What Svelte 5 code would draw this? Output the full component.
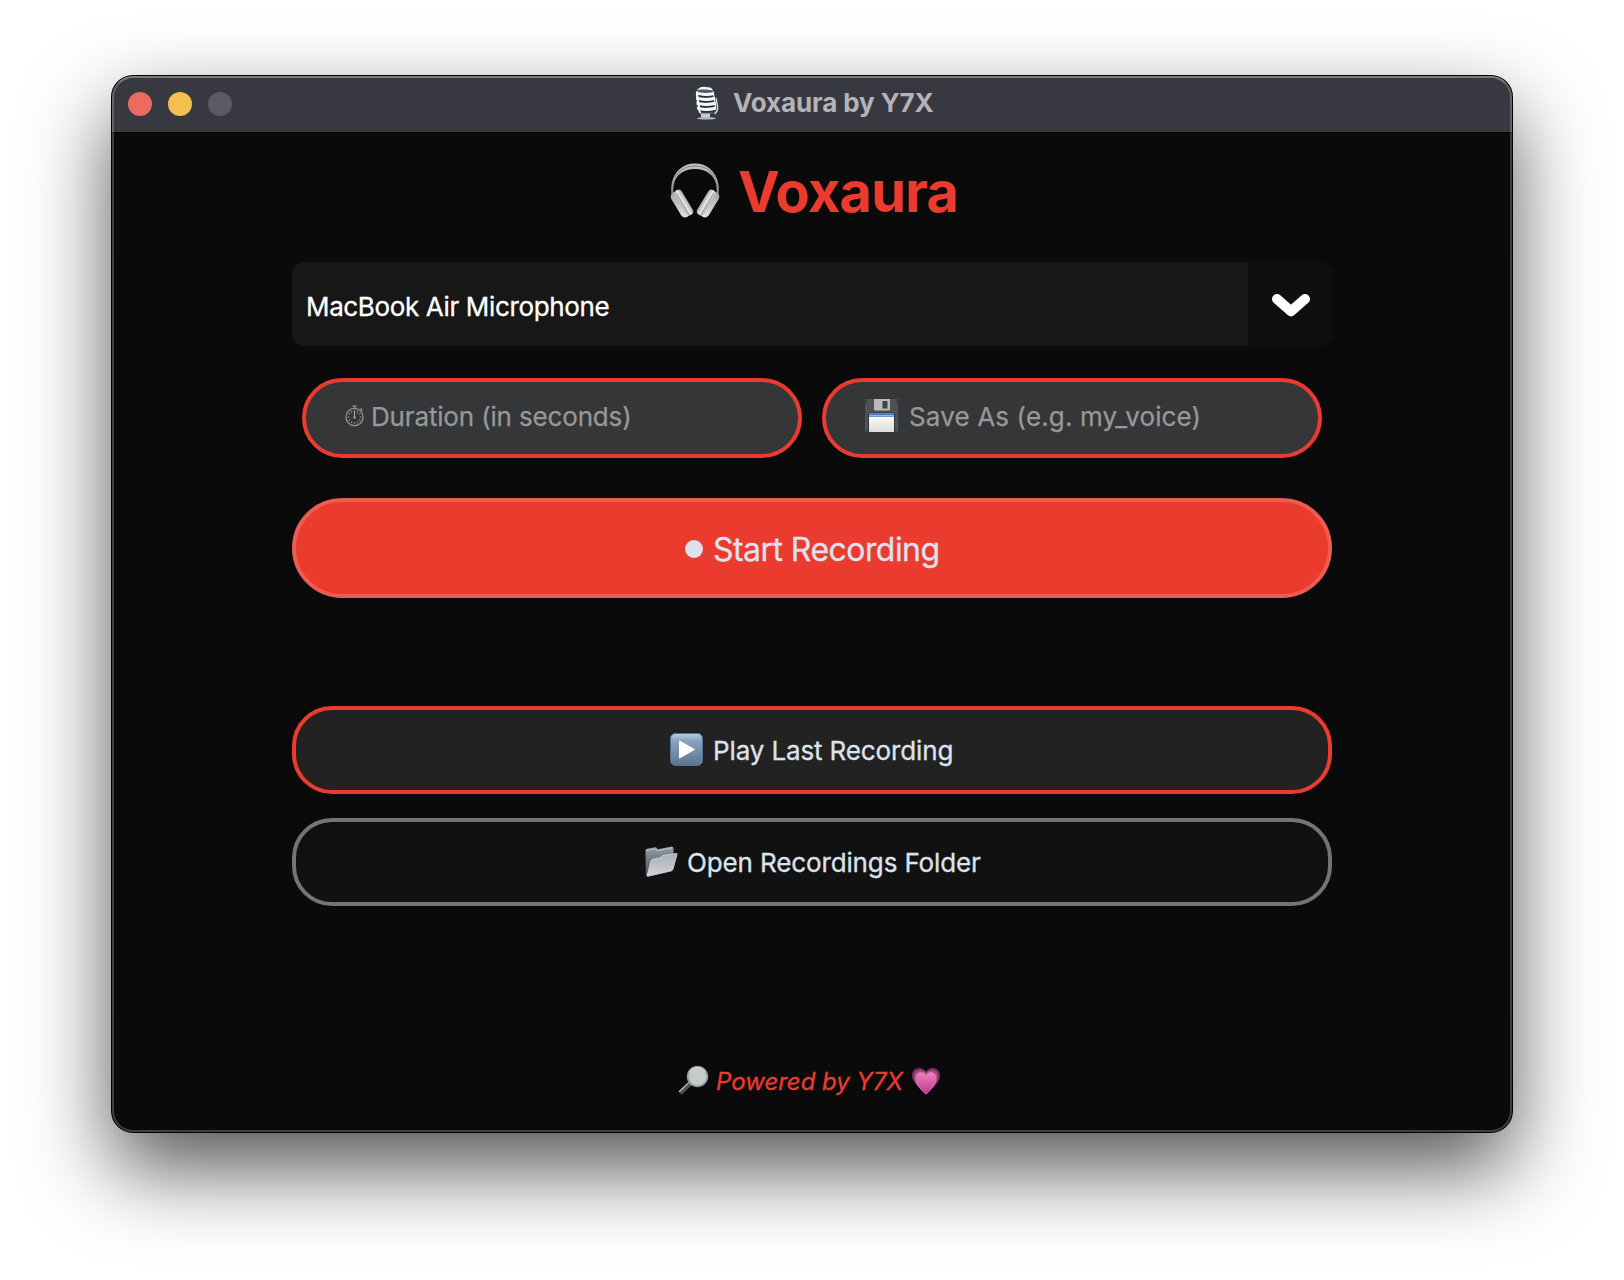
<script lang="ts">
  const ticks = Array.from({ length: 12 }, (_, i) => i * 30);
  const grille = [93, 98, 103, 108];
</script>

<main class="desktop">
  <section class="window">
    <header class="titlebar">
      <div class="lights">
        <span class="light close"></span>
        <span class="light minimize"></span>
        <span class="light zoom"></span>
      </div>
      <div class="caption">
        <svg class="mic" viewBox="694 84 26 36">
          <defs>
            <clipPath id="mic-head"><path d="M696 96c-1-7 3-10 8-10.500s9 1 10 7l2 12c1 6-3 9-8 9.500s-10-1-11-7z" /></clipPath>
          </defs>
          <g clip-path="url(#mic-head)">
            <rect x="694" y="84" width="26" height="32" fill="#4a5a68" />
            <path d="M695 88l8-1 14 1.500" stroke="#f2f5f7" stroke-width="2.600" fill="none" />
            {#each grille as y}
              <path d="M695 {y - 1}q10 3 23 0" stroke="#f4f6f7" stroke-width="3.200" fill="none" />
              <path d="M697 {y + 1.4}q10 3 20 0" stroke="#2e3038" stroke-width="1.200" fill="none" />
            {/each}
            <path d="M696.500 90l3.500 23" stroke="#fff" stroke-width="2" />
            <path d="M713.500 90l2.500 18" stroke="#fff" stroke-width="1.500" />
          </g>
          <path d="M716 97l1.500 8q.7 5-3 8" stroke="#d9dcdd" stroke-width="1.400" fill="none" />
          <path d="M701 112.500h9v4h-9z" fill="#c5cdd1" />
          <ellipse cx="706.500" cy="117.300" rx="9.500" ry="1.300" fill="#b6bcc0" />
        </svg>
        <span class="caption-text">Voxaura by Y7X</span>
      </div>
    </header>

    <div class="content">
      <h1 class="brand">
        <svg class="headphones" viewBox="670 163 50 56">
          <defs>
            <linearGradient id="band" x1="0" y1="0" x2="0" y2="1">
              <stop offset="0" stop-color="#c6c6c6" /><stop offset="1" stop-color="#858585" />
            </linearGradient>
            <linearGradient id="cup" x1="0" y1="0" x2="1" y2="0">
              <stop offset="0" stop-color="#b4b4b4" /><stop offset=".5" stop-color="#e8e8e8" /><stop offset="1" stop-color="#a4a4a4" />
            </linearGradient>
            <linearGradient id="shell" x1="0" y1="0" x2="0" y2="1">
              <stop offset="0" stop-color="#aaa" /><stop offset="1" stop-color="#e2e2e2" />
            </linearGradient>
            <g id="ear">
              <rect x="-5" y="-14" width="10" height="28" rx="4.500" transform="translate(680.500 204.500) rotate(-31)" fill="url(#shell)" />
              <rect x="-4" y="-14.500" width="8" height="28.500" rx="4" transform="translate(684 202.800) rotate(-31)" fill="url(#cup)" />
              <path d="M676.500 193.500l13 22" stroke="#8d8d8d" stroke-width=".8" />
            </g>
          </defs>
          <path d="M671.800 196c-1-4-.8-9 0-13 2.600-12 11.600-19.500 23.200-19.500s20.600 7.500 23.200 19.500c.8 4 1 9 0 13h-1.700c.4-4.500.2-9-.5-12.500-2.300-9-10-14.500-21-14.500s-18.700 5.500-21 14.500c-.7 3.500-.9 8-.5 12.500z" fill="url(#band)" />
          <path d="M675.500 177c4-7.500 11-11 19.500-11s15.500 3.500 19.500 11" fill="none" stroke="#6f6f6f" stroke-width=".8" />
          <use href="#ear" />
          <use href="#ear" transform="matrix(-1 0 0 1 1390 0)" />
        </svg>
        <span class="brand-text">Voxaura</span>
      </h1>

      <div class="select">
        <span class="device">MacBook Air Microphone</span>
        <span class="arrow">
          <svg class="chevron" viewBox="0 0 38 22"><path d="M5 5l14 12.200L33 5" /></svg>
        </span>
      </div>

      <div class="fields">
        <div class="field">
          <svg class="stopwatch" viewBox="0 0 20 22">
            <circle cx="9.500" cy="12" r="8.600" />
            <path d="M7.500 1.200h4M9.500 1v3M15.500 3.500l2 2M9.500 6v6" />
            {#each ticks as angle}
              <path d="M9.500 5.200v1.500" transform="rotate({angle} 9.500 12)" />
            {/each}
            <circle cx="9.500" cy="12.500" r=".7" />
          </svg>
          <span class="duration">Duration (in seconds)</span>
        </div>
        <div class="field">
          <svg class="floppy" viewBox="0 0 33 33">
            <defs>
              <linearGradient id="paper" x1="0" y1="0" x2="0" y2="1">
                <stop offset="0" stop-color="#fff" /><stop offset="1" stop-color="#dcdcdc" />
              </linearGradient>
            </defs>
            <path d="M0 0h32l1 1v32H0z" fill="#505152" />
            <path d="M1 1v4M32 1v4M2 31v2M31 31v2" stroke="#333" />
            <path d="M9 0h16v10.500q0 1-1 1H10q-1 0-1-1z" fill="#b9b9bb" />
            <path d="M17.500 2h5v7.500h-5z" fill="#424244" />
            <path d="M3 33V15q0-1.500 1.500-1.500h24Q30 13.500 30 15v18" fill="#303133" />
            <path d="M4 14.500h25V33H4z" fill="url(#paper)" />
            <path d="M4 14.500h25V18H4z" fill="#3f72bd" />
            <path d="M4 16.800h25" stroke="#a9caf0" stroke-width="1.300" />
          </svg>
          <span class="filename">Save As (e.g. my_voice)</span>
        </div>
      </div>

      <button class="button start"><span class="dot"></span><span class="start-text">Start Recording</span></button>

      <div class="actions">
        <button class="button play">
          <svg class="play-icon" viewBox="0 0 33 33">
            <defs>
              <linearGradient id="tile" x1="0" y1="0" x2="0" y2="1">
                <stop offset="0" stop-color="#b8d0e3" /><stop offset=".22" stop-color="#87a3c1" /><stop offset="1" stop-color="#5e7490" />
              </linearGradient>
            </defs>
            <rect x=".5" y=".5" width="32" height="32" rx="5" fill="url(#tile)" stroke="#56718c" />
            <path d="M9.500 8v17l15-8.500z" fill="#fff" stroke="#fff" stroke-width="1" stroke-linejoin="round" />
          </svg>
          <span class="play-text">Play Last Recording</span>
        </button>
        <button class="button open">
          <svg class="folder" viewBox="0 0 33 31">
            <defs>
              <linearGradient id="folder-back" x1="0" y1="0" x2="0" y2="1">
                <stop offset="0" stop-color="#929da5" /><stop offset="1" stop-color="#46515b" />
              </linearGradient>
              <linearGradient id="folder-front" x1="0" y1="0" x2="0" y2="1">
                <stop offset="0" stop-color="#a9afb4" /><stop offset="1" stop-color="#d2d4d6" />
              </linearGradient>
            </defs>
            <path d="M.5 4.500Q.5 3 2 2.800l8-1.500q1.500-.2 2 1l.5 1L27 .6l1.500 1.200V22L2 30.500.8 29z" fill="url(#folder-back)" />
            <path d="M1 4.800l9.500-2 1.500 2L27.500 1.800" fill="none" stroke="#c6ced3" stroke-width=".8" />
            <path d="M2 29.800L6 15q.5-1.500 2-1.800L15 12l3-2.500L31 7.500q1.500-.2 1 1.300L28 23q-.4 1.600-2 2L3 30.300z" fill="url(#folder-front)" stroke="#e0e4e6" stroke-width=".7" />
          </svg>
          <span class="open-text">Open Recordings Folder</span>
        </button>
      </div>

      <footer class="footer">
        <svg class="magnifier" viewBox="0 0 31 29">
          <path d="M12 17.500L2 27" stroke="#4b5053" stroke-width="5" />
          <path d="M11 16.500L1 26" stroke="#aeb5b9" stroke-width="1.200" />
          <path d="M10.500 15.500l3.500 3.500" stroke="#777" stroke-width="2" />
          <circle cx="19.500" cy="10.500" r="10" fill="#bfc0c1" stroke="#87959c" stroke-width="1.500" />
          <path d="M11 6.500a9.500 9.500 0 0 1 16-1" fill="none" stroke="#eef5f8" />
          <circle cx="19.500" cy="10.700" r="8" fill="#c9c9c9" />
        </svg>
        <span class="footer-text">Powered by Y7X</span>
        <svg class="heart" viewBox="0 0 28 27">
          <defs>
            <linearGradient id="pink" x1="0" y1="0" x2="0" y2="1">
              <stop offset="0" stop-color="#f07fbe" /><stop offset="1" stop-color="#bb3a8d" />
            </linearGradient>
          </defs>
          <path d="M14 26.500C7 20 0 14 0 7.500 0 2.800 3.200 0 7 0c3.200 0 5.500 1.500 7 3.500C15.500 1.500 17.800 0 21 0c3.800 0 7 2.800 7 7.500C28 14 21 20 14 26.500z" fill="#75305b" />
          <path d="M14 26.500C8 21 2 14.500 2 8.500 2 4.500 4.500 2 8 2c3 0 5 1.500 6 3.300C15 3.500 17 2 20 2c3.500 0 6 2.500 6 6.500C26 14.500 20 21 14 26.500z" fill="#a94c86" />
          <path d="M14 26C8.500 21 4 16 4 10.300 4 6.500 6.300 4.600 9 4.600c2.500 0 4 1.300 5 3 1-1.700 2.500-3 5-3 2.700 0 5 1.900 5 5.700C24 16 19.500 21 14 26z" fill="url(#pink)" stroke="#e678b6" stroke-width=".7" />
        </svg>
      </footer>
    </div>
  </section>
</main>

<style>
  :global(body) {
    background: #fff;
    overflow: hidden;
  }
  .desktop {
    box-sizing: border-box;
    width: 1624px;
    height: 1280px;
    padding: 76px 112px 148px;
    overflow: hidden;
    font-family: Inter, sans-serif;
  }
  svg {
    display: block;
    flex: none;
    overflow: visible;
  }
  span {
    white-space: nowrap;
  }
  .window {
    position: relative;
    width: 1400px;
    height: 1056px;
    border-radius: 21px;
    background: #0a0a0a;
    box-shadow: 0 0 0 1px #000, 0 36px 84px rgba(0, 0, 0, 0.68);
  }
  .window::after {
    content: "";
    position: absolute;
    inset: 0;
    border: 2px solid rgba(255, 255, 255, 0.22);
    border-top-color: rgba(255, 255, 255, 0.34);
    border-radius: 21px;
    pointer-events: none;
  }
  .titlebar {
    box-sizing: border-box;
    display: flex;
    align-items: center;
    height: 57px;
    padding: 0 16px;
    border-radius: 21px 21px 0 0;
    border-bottom: 1px solid #000;
    background: #383840;
  }
  .lights {
    display: flex;
    gap: 16px;
  }
  .light {
    width: 24px;
    height: 24px;
    border-radius: 50%;
  }
  .close { background: #ed6a5e; }
  .minimize { background: #f5bf4f; }
  .zoom { background: #5b5b64; }
  .caption {
    display: flex;
    align-items: center;
    gap: 13px;
    margin-left: 462px;
    height: 54px;
    padding-bottom: 2px;
    box-sizing: border-box;
  }
  .mic {
    width: 26px;
    height: 36px;
  }
  .caption-text {
    font-size: 26px;
    font-weight: 700;
    line-height: 32px;
    letter-spacing: -0.1px;
    color: #b3b3b9;
  }
  .content {
    display: flex;
    flex-direction: column;
    width: 1040px;
    margin: 0 auto;
  }
  .brand {
    display: flex;
    align-items: center;
    gap: 18px;
    height: 129px;
    margin: 0;
    padding: 0 0 13px 378px;
    box-sizing: border-box;
  }
  .headphones {
    width: 50px;
    height: 56px;
  }
  .brand-text {
    padding-top: 2px;
    font-size: 56px;
    font-weight: 700;
    line-height: 60px;
    letter-spacing: -0.8px;
    color: #eb3b2f;
  }
  .select {
    display: flex;
    align-items: center;
    justify-content: space-between;
    height: 84px;
    border-radius: 12px;
    background: #171717;
    overflow: hidden;
  }
  .device {
    padding: 5px 0 0 14px;
    font-size: 26px;
    letter-spacing: -0.36px;
    color: #fff;
    -webkit-text-stroke: 0.3px currentColor;
  }
  .arrow {
    display: flex;
    align-items: center;
    justify-content: center;
    width: 84px;
    height: 84px;
    background: #0f0f0f;
  }
  .chevron {
    width: 38px;
    height: 22px;
    margin: 2px 0 0 2px;
  }
  .chevron path {
    fill: none;
    stroke: #fff;
    stroke-width: 10;
    stroke-linecap: round;
    stroke-linejoin: round;
  }
  .fields {
    display: flex;
    gap: 20px;
    padding: 32px 10px 40px;
  }
  .field {
    box-sizing: border-box;
    display: flex;
    align-items: center;
    width: 500px;
    height: 80px;
    padding: 0 0 4px 39px;
    border: 4px solid #eb3b2f;
    border-radius: 40px;
    background: #353637;
    font-size: 26px;
    color: #989898;
    -webkit-text-stroke: 0.25px currentColor;
  }
  .duration {
    letter-spacing: -0.16px;
  }
  .filename {
    letter-spacing: 0.14px;
  }
  .stopwatch {
    width: 20px;
    height: 22px;
    margin: 0 6px 0 0;
    fill: none;
    stroke: #999;
    stroke-width: 1.2;
  }
  .floppy {
    width: 33px;
    height: 33px;
    margin-right: 11px;
    margin-top: -2px;
  }
  .button {
    box-sizing: border-box;
    display: flex;
    align-items: center;
    justify-content: flex-start;
    width: 1040px;
    margin: 0;
    padding: 0;
    border: 4px solid;
    font-family: inherit;
    font-size: 26px;
    color: #dde2ee;
    -webkit-text-stroke: 0.3px currentColor;
  }
  .start {
    height: 100px;
    padding-left: 389px;
    border-color: #eb5c53;
    border-radius: 50px;
    background: #eb3b2f;
    font-size: 32px;
    letter-spacing: -0.55px;
  }
  .dot {
    width: 18px;
    height: 18px;
    margin-top: 1px;
    margin-right: 10px;
    border-radius: 50%;
    background: #dde2ee;
  }
  .start-text {
    padding-top: 2px;
  }
  .actions {
    display: flex;
    flex-direction: column;
    gap: 24px;
    margin-top: 108px;
  }
  .play,
  .open {
    height: 88px;
    border-radius: 40px;
    letter-spacing: -0.13px;
  }
  .play {
    padding-left: 374px;
    border-color: #eb3b2f;
    background: #222;
  }
  .play-icon {
    width: 33px;
    height: 33px;
    margin: -2px 10px 0 0;
  }
  .open {
    padding-left: 349px;
    border-color: #747474;
    background: #111;
  }
  .folder {
    width: 33px;
    height: 31px;
    margin: -2px 9px 0 0;
  }
  .footer {
    display: flex;
    align-items: center;
    height: 32px;
    margin-top: 159px;
    padding-left: 386px;
    font-size: 24px;
    font-style: italic;
    color: #eb3b2f;
    -webkit-text-stroke: 0.3px currentColor;
  }
  .magnifier {
    width: 31px;
    height: 29px;
    margin: -1px 7px 0 0;
  }
  .heart {
    width: 28px;
    height: 27px;
    margin-left: 9px;
  }
</style>
